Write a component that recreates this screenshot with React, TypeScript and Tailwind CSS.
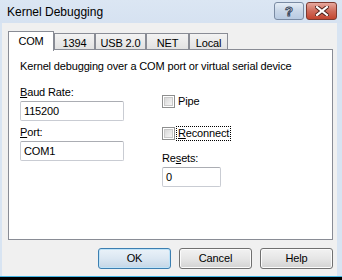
import React from "react";

function Checkbox({ label, focused }: { label: React.ReactNode; focused?: boolean }) {
  return (
    <div className="flex items-center h-[13px]">
      <div className="w-[13px] h-[13px] border border-[#8e8f8f] bg-white p-[1px]">
        <div className="w-full h-full bg-gradient-to-br from-[#d8d8d8] to-[#f6f6f6] border border-[#c9c9c9]" />
      </div>
      <span
        className={
          "ml-[2px] px-[1px] leading-[13px] " +
          (focused ? "outline outline-1 outline-dotted outline-black" : "")
        }
      >
        {label}
      </span>
    </div>
  );
}

function TextBox({ value, width }: { value: string; width: string }) {
  return (
    <div
      className={
        width +
        " h-[20px] border border-[#c9ccd3] border-t-[#abadb3] rounded-[2px] bg-white flex items-center pl-[3px] leading-[13px]"
      }
    >
      {value}
    </div>
  );
}

function Tab({ label, width, selected }: { label: string; width: string; selected?: boolean }) {
  if (selected) {
    return (
      <div
        className={
          width +
          " h-[20px] bg-white border border-b-0 border-[#898c95] flex justify-center pt-[3px] leading-[13px] relative z-10 -mb-[1px]"
        }
      >
        {label}
      </div>
    );
  }
  return (
    <div
      className={
        width +
        " h-[17px] bg-gradient-to-b from-[#f3f3f3] to-[#e1e1e1] border border-b-0 border-[#898c95] flex justify-center pt-[3px] leading-[13px]"
      }
    >
      {label}
    </div>
  );
}

function Button({ label, isDefault }: { label: string; isDefault?: boolean }) {
  return (
    <div
      className={
        "w-[73px] h-[21px] rounded-[3px] border flex items-center justify-center leading-[13px] " +
        (isDefault
          ? "border-[#3c7fb1] bg-gradient-to-b from-[#eaf2f9] via-[#dbe7f2] to-[#c4d6e6] shadow-[inset_0_0_0_1px_#bfe3f8]"
          : "border-[#707070] bg-gradient-to-b from-[#f2f2f2] via-[#e6e6e6] to-[#d2d2d2] shadow-[inset_0_0_0_1px_#fbfbfb]")
      }
    >
      {label}
    </div>
  );
}

export default function App() {
  return (
    <div className="w-[342px] h-[280px] overflow-hidden bg-[#d8e4f2] flex flex-col text-[11px] tracking-[-0.15px] text-black font-['Liberation_Sans',Arial,sans-serif]">
      <div className="h-[23px] flex items-start bg-gradient-to-b from-[#dbe6f3] to-[#d6e2f1]">
        <span className="ml-[7px] mt-[5px] text-[12px] leading-[14px] tracking-normal text-black">Kernel Debugging</span>
        <div className="ml-auto mt-[2px] flex gap-[2px] mr-[5px]">
          <div className="w-[30px] h-[18px] rounded-[3px] border border-[#7a8ba3] bg-gradient-to-b from-[#e5edf6] via-[#c9d7e8] to-[#b8cbe2] flex items-center justify-center">
            <span className="text-[13px] font-bold leading-[13px] text-[#f4f6f9] [-webkit-text-stroke:1px_#3b4a60]">?</span>
          </div>
          <div className="w-[31px] h-[18px] rounded-[3px] border border-[#7d3a30] bg-gradient-to-b from-[#e5a89e] via-[#cf6b5b] to-[#c3452f] flex items-center justify-center">
            <svg width="14" height="10" viewBox="0 0 14 10">
              <path d="M2 1 L12 9 M12 1 L2 9" stroke="#4a1e18" strokeWidth="4" strokeLinecap="square" />
              <path d="M2 1 L12 9 M12 1 L2 9" stroke="#ffffff" strokeWidth="2.2" strokeLinecap="square" />
            </svg>
          </div>
        </div>
      </div>

      <div className="h-[253px] ml-[2px] mr-[5px] bg-[#f0f0f0] flex flex-col pl-[6px] pt-[7px]">
        <div className="flex items-end h-[20px] -mb-[1px]">
          <Tab label="COM" width="w-[46px]" selected />
          <Tab label="1394" width="w-[41px]" />
          <Tab label="USB 2.0" width="w-[51px]" />
          <Tab label="NET" width="w-[43px]" />
          <Tab label="Local" width="w-[39px]" />
        </div>

        <div className="w-[325px] h-[191px] bg-white border border-[#898c95] pl-[11px] pt-[10px]">
          <div className="leading-[13px]">Kernel debugging over a COM port or virtual serial device</div>
          <div className="flex">
            <div className="w-[142px] flex flex-col">
              <div className="mt-[13px] leading-[13px]">
                <span className="underline">B</span>aud Rate:
              </div>
              <div className="mt-[2px]">
                <TextBox value="115200" width="w-[104px]" />
              </div>
              <div className="mt-[5px] leading-[13px]">
                <span className="underline">P</span>ort:
              </div>
              <div className="mt-[2px]">
                <TextBox value="COM1" width="w-[104px]" />
              </div>
            </div>
            <div className="flex flex-col">
              <div className="mt-[22px]">
                <Checkbox label="Pipe" />
              </div>
              <div className="mt-[19px]">
                <Checkbox label={<><span className="underline">R</span>econnect</>} focused />
              </div>
              <div className="mt-[12px] leading-[13px]">
                Re<span className="underline">s</span>ets:
              </div>
              <div className="mt-[2px]">
                <TextBox value="0" width="w-[59px]" />
              </div>
            </div>
          </div>
        </div>

        <div className="w-[325px] flex justify-end gap-[8px] mt-[8px]">
          <Button label="OK" isDefault />
          <Button label="Cancel" />
          <Button label="Help" />
        </div>
      </div>
      <div className="h-[1px] bg-[#46b6e6]" />
      <div className="h-[3px] bg-black" />
    </div>
  );
}
